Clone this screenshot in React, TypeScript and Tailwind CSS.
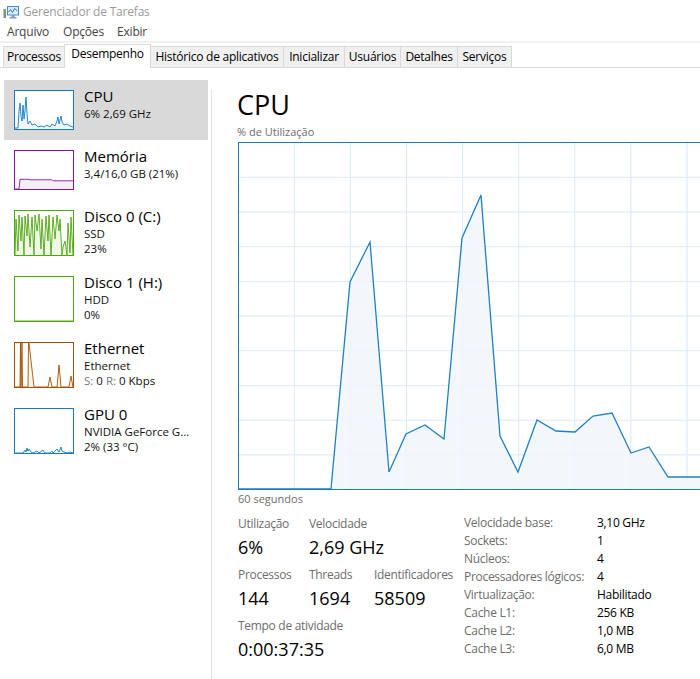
import React from "react";

type Pt = [number, number];

function Spark({ w, h, pts, stroke, fill }: { w: number; h: number; pts: Pt[]; stroke: string; fill: string }) {
  const line = pts.map((p) => p.join(",")).join(" ");
  const poly = [...pts, [w, h] as Pt, [0, h] as Pt].map((p) => p.join(",")).join(" ");
  return (
    <svg width={w} height={h} viewBox={`0 0 ${w} ${h}`} className="block">
      <polygon points={poly} fill={fill} />
      <polyline points={line} fill="none" stroke={stroke} strokeWidth={0.9} />
    </svg>
  );
}

function Thumb({ h, color, fill, pts }: { h: number; color: string; fill: string; pts: Pt[] }) {
  return (
    <div className="shrink-0 bg-white" style={{ width: 60, height: h, border: `1px solid ${color}` }}>
      <Spark w={58} h={h - 2} pts={pts} stroke={color} fill={fill} />
    </div>
  );
}

const cpuPts: Pt[] = [
  [0, 37], [3, 37], [4, 20], [5, 12], [6, 25], [7, 30], [8, 14], [9, 28], [10, 20], [11, 6], [12, 22], [13, 33],
  [15, 30], [17, 34], [20, 33], [23, 36], [26, 35], [29, 36], [32, 34], [35, 36], [37, 33], [40, 35], [42, 30],
  [43, 26], [44, 33], [46, 25], [47, 31], [49, 34], [52, 33], [55, 35], [58, 36],
];
const memPts: Pt[] = [[0, 38], [4, 38], [5, 28.3], [14, 28.3], [15, 28.8], [37, 28.8], [38, 29.8], [58, 29.8]];
const disk0Pts: Pt[] = [
  [0, 44], [1, 8], [3, 40], [4, 4], [6, 30], [7, 6], [9, 44], [10, 5], [12, 25], [13, 3], [15, 36], [17, 6],
  [19, 44], [20, 4], [22, 20], [24, 3], [26, 38], [27, 8], [29, 44], [31, 5], [33, 30], [34, 4], [36, 44], [38, 6],
  [40, 28], [42, 4], [44, 20], [45, 8], [47, 44], [48, 36], [50, 30], [52, 44], [53, 12], [55, 42], [56, 6], [58, 44],
];
const disk1Pts: Pt[] = [[0, 44], [58, 44]];
const ethPts: Pt[] = [
  [0, 44], [5, 44], [5.5, 0], [6, 44], [7, 0], [7.5, 44], [13, 44], [13.5, 0], [14, 0], [19, 44], [33, 44], [35, 34],
  [37, 44], [42, 44], [44, 22], [46, 44], [54, 44], [56, 33], [58, 44],
];
const gpuPts: Pt[] = [
  [0, 44], [8, 44], [10, 41], [11, 43], [12, 39], [13, 42], [14, 40], [16, 43], [18, 44], [22, 42], [24, 44],
  [28, 41], [30, 44], [35, 44], [37, 42], [38, 44], [40, 42], [42, 40], [44, 43], [46, 38], [47, 42], [49, 43],
  [52, 44], [55, 43], [58, 44],
];

function SideItem({
  selected, h, thumbH, color, fill, pts, title, lines,
}: {
  selected?: boolean; h: number; thumbH: number; color: string; fill: string; pts: Pt[]; title: string; lines: React.ReactNode[];
}) {
  return (
    <div className={`flex pl-[10px] pt-[10px] ${selected ? "bg-[#d9d9d9]" : ""}`} style={{ height: h }}>
      <Thumb h={thumbH} color={color} fill={fill} pts={pts} />
      <div className="ml-[10px] -mt-[3px] whitespace-nowrap">
        <div className="text-[15px] leading-[19px] text-black">{title}</div>
        {lines.map((l, i) => (
          <div key={i} className="text-[11.5px] leading-[15px] text-[#111]">{l}</div>
        ))}
      </div>
    </div>
  );
}

function AppIcon() {
  return (
    <svg width="16" height="13" viewBox="0 0 16 13" className="block">
      <rect x="0.5" y="3" width="2.5" height="9" fill="#8a8a8a" />
      <rect x="0.5" y="3" width="2.5" height="1.5" fill="#6cb86a" />
      <rect x="4.5" y="0.5" width="11" height="8.5" fill="#dcecf8" stroke="#4a8ac8" strokeWidth="1" />
      <polyline points="5.5,6 7.5,3.5 9.5,6.5 11.5,2.5 14.5,5" fill="none" stroke="#2a78c8" strokeWidth="1" />
      <rect x="8.5" y="9" width="3" height="2" fill="#7f9fbf" />
      <rect x="6.5" y="11" width="7" height="1.5" fill="#7f9fbf" />
    </svg>
  );
}

const tabs: { label: string; w: number }[] = [
  { label: "Processos", w: 61 },
  { label: "Desempenho", w: 87 },
  { label: "Histórico de aplicativos", w: 132 },
  { label: "Inicializar", w: 61 },
  { label: "Usuários", w: 56 },
  { label: "Detalhes", w: 57 },
  { label: "Serviços", w: 55 },
];

const graphPts: Pt[] = [
  [0, 346], [92, 346], [111, 139], [131, 99], [150, 329], [167, 291], [186, 282], [205, 296], [223, 95], [242, 52],
  [261, 293], [279, 329], [298, 277], [317, 288], [336, 289], [354, 273], [373, 270], [392, 310], [410, 304],
  [429, 334], [560, 334],
];

function MainGraph() {
  const W = 560;
  const H = 346;
  const vlines = Array.from({ length: 10 }, (_, i) => 55.3 + 56.1 * i);
  const hlines = Array.from({ length: 9 }, (_, i) => 34.3 + 34.7 * i);
  const line = graphPts.map((p) => p.join(",")).join(" ");
  const poly = [...graphPts, [W, H] as Pt, [0, H] as Pt].map((p) => p.join(",")).join(" ");
  return (
    <div className="w-[562px] h-[348px] border border-[#1a7cbf] bg-white ml-[1px] shrink-0">
      <svg width={W} height={H} viewBox={`0 0 ${W} ${H}`} className="block">
        {vlines.map((x, i) => (
          <line key={`v${i}`} x1={x} y1={0} x2={x} y2={H} stroke="#d9e9f5" strokeWidth={1} />
        ))}
        {hlines.map((y, i) => (
          <line key={`h${i}`} x1={0} y1={y} x2={W} y2={y} stroke="#d9e9f5" strokeWidth={1} />
        ))}
        <polygon points={poly} fill="#f1f6fa" fillOpacity={0.85} />
        <polyline points={line} fill="none" stroke="#1f80c2" strokeWidth={1.3} />
      </svg>
    </div>
  );
}

function Stat({ label, value }: { label: string; value: string }) {
  return (
    <div className="whitespace-nowrap">
      <div className="text-[12px] leading-[16px] text-[#6d6d6d] tracking-[-0.3px]">{label}</div>
      <div className="text-[18px] leading-[24px] text-black mt-[3px]">{value}</div>
    </div>
  );
}

const specs: [string, string][] = [
  ["Velocidade base:", "3,10 GHz"],
  ["Sockets:", "1"],
  ["Núcleos:", "4"],
  ["Processadores lógicos:", "4"],
  ["Virtualização:", "Habilitado"],
  ["Cache L1:", "256 KB"],
  ["Cache L2:", "1,0 MB"],
  ["Cache L3:", "6,0 MB"],
];

export default function App() {
  return (
    <div className="w-[700px] h-[679px] overflow-hidden bg-white font-['Open_Sans',sans-serif] text-black flex flex-col">
      {/* title bar */}
      <div className="h-[22px] shrink-0 flex items-center pl-[3px] pt-[2px] gap-[4px] text-[12px] leading-[16px] text-[#9a9a9a] tracking-[-0.2px]">
        <AppIcon />
        <span>Gerenciador de Tarefas</span>
      </div>
      {/* menu */}
      <div className="h-[19px] shrink-0 flex items-center pl-[7px] text-[12px] leading-[16px] text-[#444] tracking-[-0.2px]">
        <span className="w-[56px]">Arquivo</span>
        <span className="w-[54px]">Opções</span>
        <span>Exibir</span>
      </div>
      <div className="h-[2px] shrink-0 bg-[#f0f0f0]" />
      {/* tabs */}
      <div className="h-[25px] shrink-0 flex items-end pl-[3px] border-b border-[#d9d9d9] text-[12px] leading-[16px] tracking-[-0.25px]">
        {tabs.map((t, i) => {
          const sel = i === 1;
          const afterSel = i === 2;
          const last = i === tabs.length - 1;
          if (sel) {
            return (
              <div
                key={t.label}
                className="h-[24px] -mb-[1px] relative z-10 bg-white border-t border-l border-r border-[#d9d9d9] flex justify-center items-start pt-[1px] text-black whitespace-nowrap"
                style={{ width: t.w }}
              >
                {t.label}
              </div>
            );
          }
          return (
            <div
              key={t.label}
              className={`h-[21px] bg-[#f0f0f0] border-t border-[#d9d9d9] flex justify-center items-center text-black whitespace-nowrap ${afterSel ? "" : "border-l"} ${last ? "border-r" : ""}`}
              style={{ width: t.w }}
            >
              {t.label}
            </div>
          );
        })}
      </div>
      {/* body */}
      <div className="flex flex-1 min-h-0">
        <div className="w-[211px] shrink-0 pt-[12px] pl-[4px] pr-[3px]">
          <SideItem selected h={60} thumbH={40} color="#117dbb" fill="#f1f6fa" pts={cpuPts} title="CPU" lines={["6% 2,69 GHz"]} />
          <SideItem h={60} thumbH={40} color="#8b12ae" fill="#f3eff4" pts={memPts} title="Memória" lines={["3,4/16,0 GB (21%)"]} />
          <SideItem h={66} thumbH={46} color="#4da60c" fill="#eff7e9" pts={disk0Pts} title="Disco 0 (C:)" lines={["SSD", "23%"]} />
          <SideItem h={66} thumbH={46} color="#4da60c" fill="#eff7e9" pts={disk1Pts} title="Disco 1 (H:)" lines={["HDD", "0%"]} />
          <SideItem
            h={66}
            thumbH={46}
            color="#a74f01"
            fill="#fcf3eb"
            pts={ethPts}
            title="Ethernet"
            lines={[
              "Ethernet",
              <span key="e">
                <span className="text-[#777]">S:</span> 0 <span className="text-[#777]">R:</span> 0 Kbps
              </span>,
            ]}
          />
          <SideItem h={66} thumbH={46} color="#117dbb" fill="#f1f6fa" pts={gpuPts} title="GPU 0" lines={["NVIDIA GeForce G...", "2% (33 °C)"]} />
        </div>
        <div className="w-px shrink-0 bg-[#e3e3e3] mt-[21px]" />
        <div className="flex-1 min-w-0 pl-[25px] pt-[21px] flex flex-col">
          <div className="text-[27px] leading-[32px] text-black">CPU</div>
          <div className="mt-[3px] text-[11px] leading-[16px] text-[#6d6d6d]">% de Utilização</div>
          <div className="mt-[2px]">
            <MainGraph />
          </div>
          <div className="text-[11px] leading-[16px] text-[#6d6d6d] ml-[1px] mt-[1px]">60 segundos</div>
          <div className="mt-[7px] flex">
            <div className="w-[227px] shrink-0 pl-[1px] pt-[2px] flex flex-col gap-[8px]">
              <div className="flex">
                <div className="w-[71px]"><Stat label="Utilização" value="6%" /></div>
                <div><Stat label="Velocidade" value="2,69 GHz" /></div>
              </div>
              <div className="flex">
                <div className="w-[71px]"><Stat label="Processos" value="144" /></div>
                <div className="w-[65px]"><Stat label="Threads" value="1694" /></div>
                <div><Stat label="Identificadores" value="58509" /></div>
              </div>
              <div className="flex">
                <Stat label="Tempo de atividade" value="0:00:37:35" />
              </div>
            </div>
            <div className="flex flex-col text-[12px] leading-[18px] whitespace-nowrap tracking-[-0.3px]">
              {specs.map(([k, v]) => (
                <div key={k} className="flex">
                  <span className="w-[133px] text-[#6d6d6d]">{k}</span>
                  <span className="text-black">{v}</span>
                </div>
              ))}
            </div>
          </div>
        </div>
      </div>
    </div>
  );
}
